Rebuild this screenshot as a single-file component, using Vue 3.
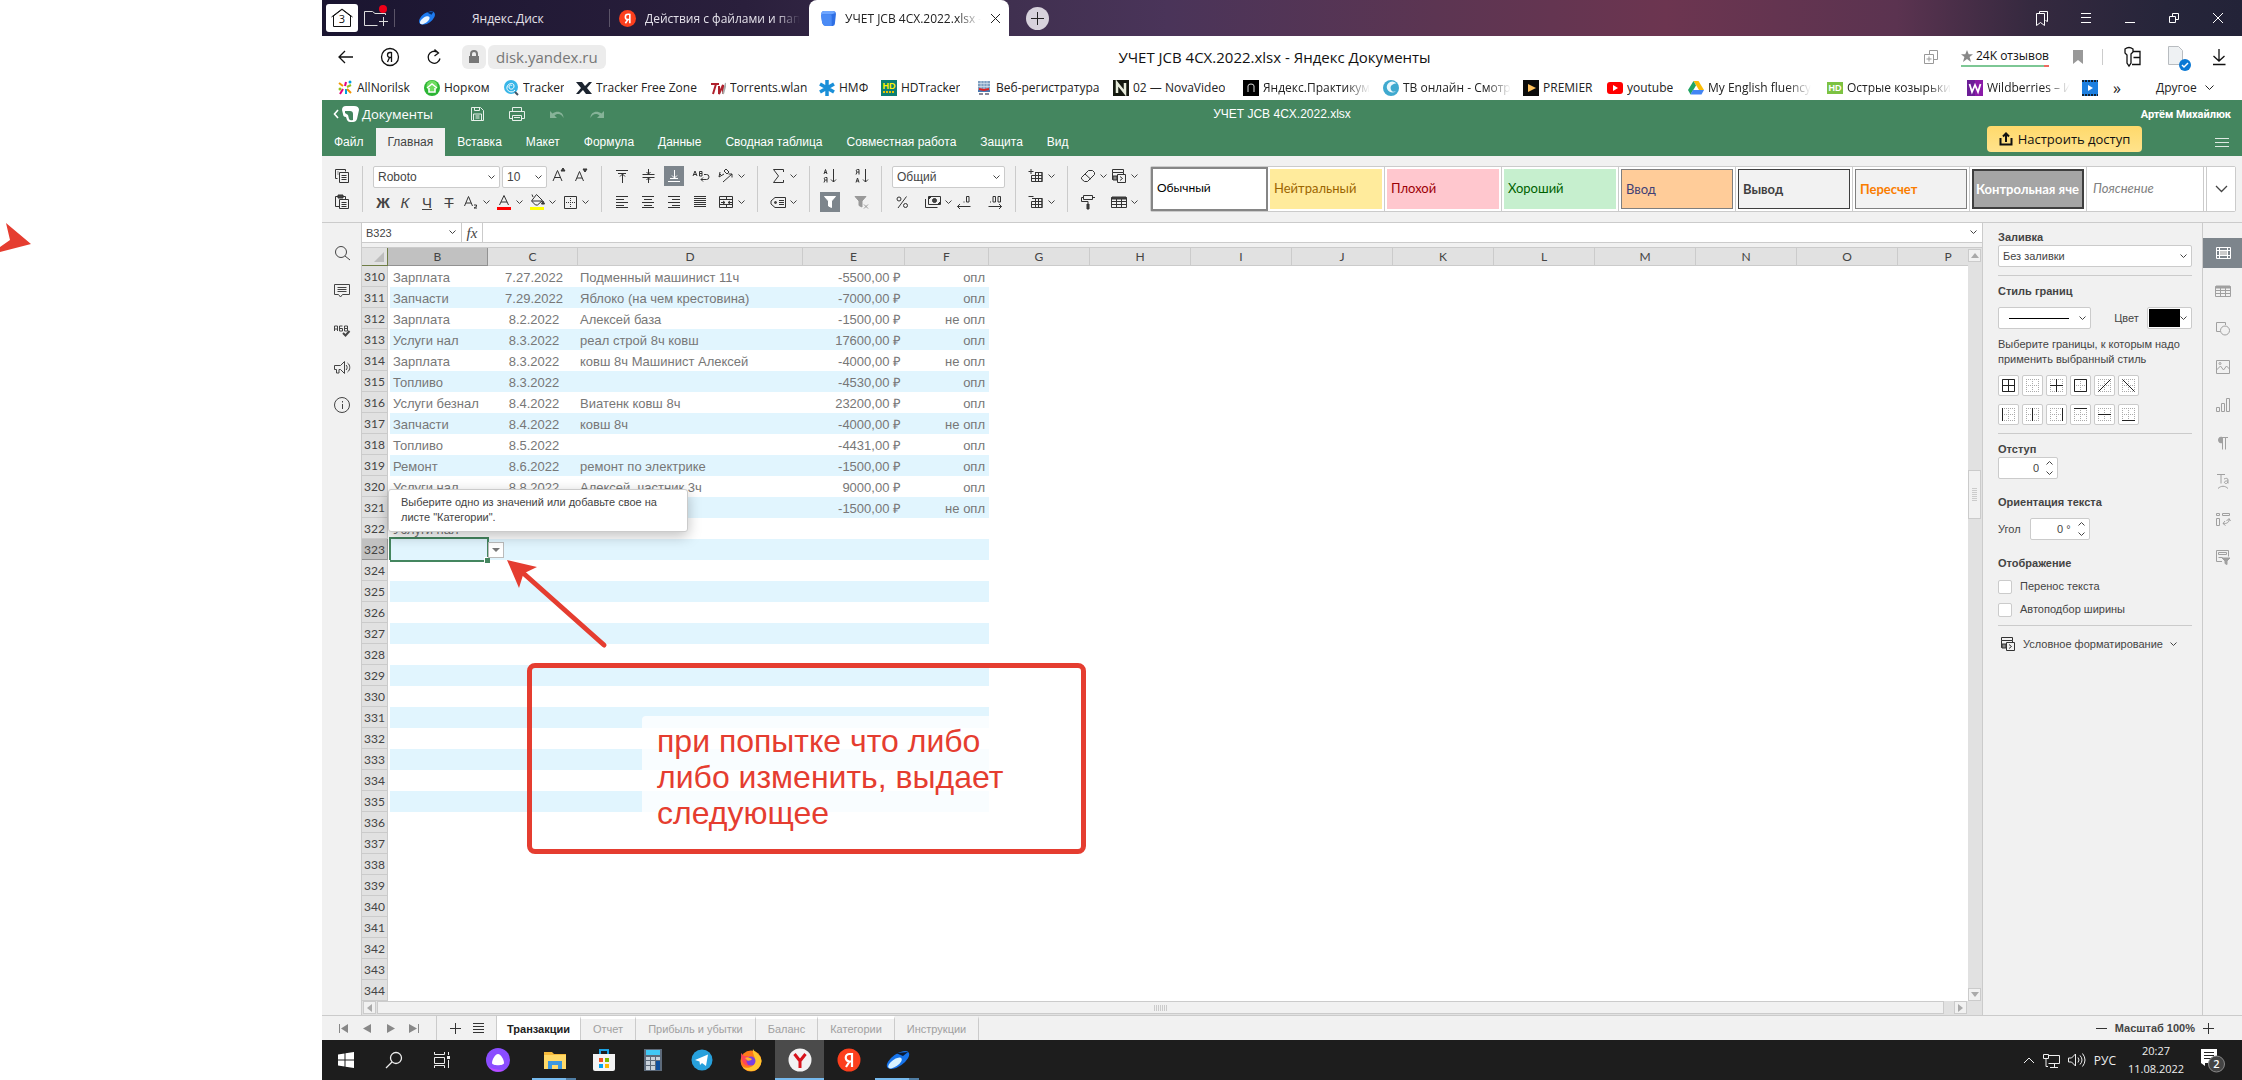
<script setup>
const icons = {
  copy: '<path d="M3.500 12.500v-9h10v2M3.500 12.500h2M5.500 6h1M5.500 8h1M7.500 6.500h9v10h-9zM9.500 9.500h5M9.500 11.500h5M9.500 13.500h5"/>',
  paste: '<path d="M7 14.500H3.500v-10h10v2.500M7.500 7.500h9v9h-9zM9.500 10.500h5M9.500 12.500h5M9.500 14.500h5"/><path d="M6 3h5v3H6z" class="f"/>',
  bigA: '<path d="M4 15L8.500 4.500 13 15M5.500 11.500h6"/><path d="M12 5l2-3 2 3z" class="f"/>',
  smallA: '<path d="M4.500 15L8.500 5.500 12.500 15M6 12h5"/><path d="M12 3h4l-2 3z" class="f"/>',
  alignTop: '<path d="M4 4.500h12M6 7.500h8M10.500 8v9M8 10.500l2.500-2.500 2.500 2.500"/>',
  alignMid: '<path d="M4.500 8.500h12M4.500 11.500h12M10.500 3v5M10.500 12v5M8.500 6l2 2 2-2M8.500 14l2-2 2 2"/>',
  alignBot: '<path d="M4 15.500h12M6 12.500h8M10.500 4v8M8 9.500l2.500 2.500 2.500-2.500"/>',
  wrap: '<path d="M3 10l2-5 2 5M3.500 8.500h3M9.500 5.500v4.500h2.500v-4.500zM9.500 7.500h2.500M14 8.500h2.500a2.500 2.500 0 0 1 0 5H11M13 11.500l-2 2 2 2"/>',
  rotate: '<path d="M3 11l5-3M3 11l1-5M4 8l2 2M8 5l3 3 2-2-3-3zM7 16L16 8M12.500 8H16v3.500"/>',
  left: '<path d="M4 4.500h12M4 7.500h8M4 10.500h12M4 13.500h8M4 15.500h12"/>',
  center: '<path d="M4 4.500h12M6 7.500h8M4 10.500h12M6 13.500h8M4 15.500h12"/>',
  right: '<path d="M4 4.500h12M8 7.500h8M4 10.500h12M8 13.500h8M4 15.500h12"/>',
  justify: '<path d="M4 4.500h12M4 6.500h12M4 8.500h12M4 10.500h12M4 12.500h12M4 14.500h12"/>',
  merge: '<path d="M3.500 4.500h13v11h-13zM3.500 7.500h13M3.500 12.500h13M10.500 4v3M10.500 13v3M5 10.500h4M12 10.500h4M7 9l2 1.500-2 1.500M14 9l-2 1.500 2 1.500"/>',
  sub: '<path d="M3.500 14L7.500 4.500 11.500 14M5 11h5"/><path d="M13 13h2.500v1.500L13 16h3"/>',
  colorA: '<path d="M5.500 13L10 3.500 14.500 13M7 10h6"/><path d="M3 15h14v3H3z" style="fill:#f00;stroke:none"/>',
  fill: '<path d="M9.500 2.500l6 6-5 4.500h-2L4.500 9zM6 5l-1-2.500M5 9h10"/><path d="M16 9l1.500 3h-3z" class="f"/><path d="M3 15h14v3H3z" style="fill:#ff0;stroke:none"/>',
  border: '<path d="M4.500 4.500h12v12h-12z"/><path d="M10.500 6v10M6 10.500h10" stroke-dasharray="1 1"/>',
  sigma: '<path d="M15.500 6V3.500H5.500l5 6.500-5 6.500h10V14"/>',
  tag: '<path d="M7 5.500h10.500v10H7L3 12V9zM11 8.500h5M11 10.500h5M11 12.500h5"/><circle cx="7.500" cy="10.500" r="1" class="f"/>',
  sortAZ: '<path d="M4 8l1.500-4.500L7 8M4.500 6.500h2M4 16.500l1-2.500M7 16.500v-5H5.500a1 1 0 0 0 0 2.500H7M13.500 3v13M11 13.500l2.500 2.500 2.500-2.500"/>',
  sortZA: '<path d="M4 8.500l1-2.500M7 8.500v-5H5.500a1 1 0 0 0 0 2.500H7M4 16.500L5.500 12 7 16.500M4.500 15h2M13.500 3v13M11 13.500l2.500 2.500 2.500-2.500"/>',
  filter: '<path d="M4.500 4.500h11L11.500 9v6.500l-3-1.500V9z" class="f"/>',
  noFilter: '<path d="M3 4.500h11L10 9v6l-3-1.500V9z" style="fill:#999;stroke:#999"/><path d="M12 12.500l4 4M16 12.500l-4 4" style="stroke:#999"/>',
  percent: '<circle cx="7" cy="7" r="2"/><circle cx="13.500" cy="13.500" r="2"/><path d="M14.500 4.500L6 16"/>',
  money: '<path d="M5.500 4.500h12v8h-12zM2.500 7v8.500h12"/><circle cx="11.500" cy="8.500" r="2" class="f"/><path d="M6 5l2 0-2 2zM17 12h-2l2-2z" class="f"/>',
  dec: '<path d="M12.500 4.500h2.500v5.500h-2.500zM10 9.500v1M3.500 14.500h13M6 12l-2.500 2.500L6 17"/>',
  inc: '<path d="M8 4.500h2.500v5.500H8zM13 4.500h2.500v5.500H13zM5.500 9.500v1M3.500 14.500h13M14 12l2.500 2.500-2.500 2.500"/>',
  insCell: '<path d="M2.500 5.500h5M5 3v5M5.500 15.500h10.500v-9H9M9.500 6v9.500M12.500 6v9.500M5.500 9.500h10.500M5.500 12.500h10.500M5.500 9.500v6M16 6v10"/>',
  delCell: '<path d="M2.500 4.500h5M5.500 15.500h10.500v-9H6M9.500 6v9.500M12.500 6v9.500M5.500 9.500h10.500M5.500 12.500h10.500M5.500 9.500v6M16 6v10"/>',
  eraser: '<path d="M3.500 11.500L10.500 4.500h4l2 2v2l-7 7h-3l-3-2.500zM7 8l5.500 5"/>',
  cond: '<path d="M3.500 3.500h11v3h-11zM3.500 6.500v7h4M14.500 6.500v1.500"/><path d="M4 10h4v4H4z" style="fill:#888"/><path d="M8.500 8.500h8v8h-8zM11 10.500l2.500 2-2.500 2"/>',
  painter: '<path d="M5.500 3.500h9v4h-9zM5.500 5.500h-2v4h6.500v2M14.500 5.500H17"/><path d="M9 12h2v5H9z" class="f"/>',
  table: '<path d="M2.500 5.500h15v10h-15zM2.500 9.500h15M2.500 12.500h15M7.500 6v9.500M12.500 6v9.500"/><path d="M3 5h14v2H3z" class="f"/>',
  search: '<circle cx="9" cy="9" r="5.500"/><path d="M13 13l5 4"/>',
  comment: '<path d="M2.500 3.500h15v10h-7l-2 2.500-2-2.500h-4zM5.500 6.500h9M5.500 8.500h9M5.500 10.500h9"/>',
  spell: '<path d="M2.500 12V7h3v5M2.500 10h3M7.500 7v5h3V9.500h-3M10.500 7h-3M12.500 7v5h3V7zM12.500 9.500h3"/><path d="M11 14l2.500 2.500L17.500 12" stroke-width="2"/>',
  horn: '<path d="M2.500 8.500h6l4-4v12l-4-4H7v3.500H4.500v-3.500h-2zM14 8c1.500 1 1.500 4 0 5M15.500 6c3 2 3 7 0 9"/>',
  info: '<circle cx="10" cy="10" r="7.500"/><path d="M10.500 9v5M10.500 6v1.500"/>',
  pCell: '<path d="M3.500 4.500h14v11h-14zM3.500 7.500h14M3.500 12.500h14M6.500 5v10M14.500 5v10"/><path d="M7 8h7v4H7z" style="fill:#ccc;stroke:none"/>',
  pTable: '<path d="M2.500 5.500h15v10h-15zM2.500 9.500h15M2.500 12.500h15M7.500 6v9.500M12.500 6v9.500"/><path d="M3 5h14v2H3z" class="f"/>',
  pShape: '<path d="M7 12.500H3.500v-9h9V6"/><circle cx="12" cy="11.500" r="4.500"/>',
  pImage: '<path d="M3.500 3.500h13v13h-13zM3.500 13l4-4 3 4 3-4 3 3"/><circle cx="7" cy="6.500" r="1"/>',
  pChart: '<path d="M3.500 12.500h3v4h-3zM8.500 8.500h3v8h-3zM13.500 3.500h3v13h-3z"/>',
  pPara: '<path d="M8.500 10a3 3 0 0 1 0-6z" class="f"/><path d="M8 4.500h7M9.500 4v12.500M12.500 4v12.500"/>',
  pText: '<path d="M4 3.500h8M8 3.500v9M11 8c2-1 4-1 4 1v3.500M15 10c-5-.5-4 3-1.500 2.500L15 11M5 17.500c3-3 7-3 10 0"/>',
  pPivot: '<path d="M3.500 4.500h3v2h-3zM9.500 4.500h7v2h-7zM3.500 9.500h3v7h-3zM16 10c.5 3-2 5-6 4.500M12 12l-2 2.500 2.500 2M13.500 12l2.500-2.500 1.500 2.500"/>',
  pSlicer: '<path d="M9 14.500H3.500v-11h12v6M5.500 5.500h8v2h-8zM5.500 10.500h4"/><path d="M9 11h8l-3 3v3.500l-2-1V14z" class="f"/>',
}
const favicons = {
  disk: '<ellipse cx="8" cy="8" rx="8" ry="4.500" transform="rotate(-35 8 8)" fill="#1e7bf0"/><ellipse cx="6" cy="10" rx="5" ry="2.500" transform="rotate(-35 6 10)" fill="#e8f5ff"/><path d="M8 3l6-1-2 3z" fill="#052a66"/>',
  ya: '<circle cx="8" cy="8" r="8" fill="#fc3f1d"/><path d="M10.200 3.500v9M10 4H8.500a2.400 2.400 0 0 0 0 5H10M8.300 9L6 12.500" fill="none" stroke="#fff" stroke-width="1.500"/>',
  docs: '<path d="M4 1h8q3 0 3 3l-1 9q0 2-2 2H5q-2 0-3-3L1 5q0-4 3-4z" fill="#2f6fe4"/><path d="M4 1h8q2 0 2 2l-3 1H4q-2 0-3 1 0-4 3-4z" fill="#6ea6ff"/><path d="M1 5q0-1 3-1h5q2 0 2 2v9H5q-2 0-3-3z" fill="#4b8bf5"/>',
  norilsk: '<g stroke-width="2" fill="none"><path d="M2 3l4 3" stroke="#f29400"/><path d="M9 2l-1 4" stroke="#e5007e"/><path d="M14 5l-4 2" stroke="#93c01f"/><path d="M3 14l3-5" stroke="#e5007e"/><path d="M9 14V9" stroke="#009fe3"/><path d="M14 13l-4-4" stroke="#f29400"/></g><circle cx="3" cy="9" r="1.500" fill="#93c01f"/><circle cx="13" cy="2" r="1.500" fill="#009fe3"/>',
  norkom: '<circle cx="8" cy="8" r="8" fill="#2bb534"/><circle cx="8" cy="6" r="5.500" fill="#6fdc60"/><path d="M3 8l5-4 5 4M5 8v4h6V8" fill="none" stroke="#fff" stroke-width="1.500"/>',
  tracker: '<circle cx="8" cy="7" r="7" fill="#38b6e8"/><path d="M12 10c-3 4-9 1-8-3s7-5 7-1-5 4-5 1 3-2 3-1" fill="none" stroke="#fff"/><path d="M12 12l3 3" stroke="#456" stroke-width="2"/>',
  x: '<path d="M0 2h6l3 4 4-4h3l-5 6 5 6h-6l-3-4-4 4H0l5-6z" fill="#1c2430"/>',
  tw: '<path d="M1 4h8M6 4L3 14M9 6v8l4-9v9" stroke="#b0202c" stroke-width="2" fill="none"/><path d="M13 14l3-11" stroke="#aaa" stroke-width="2"/>',
  star: '<path d="M8 0v16M1 4l14 8M1 12l14-8" stroke="#1a8fd8" stroke-width="3.500"/>',
  hdt: '<path d="M0 0h16v16H0z" fill="#0c7f75"/><text x="8" y="9" text-anchor="middle" font-size="9" font-weight="700" font-family="Liberation Sans, sans-serif" fill="#fff200">HD</text><path d="M2 12h12" stroke="#e8c200" stroke-dasharray="2 1" stroke-width="2"/>',
  web: '<path d="M2 1h12v10H2z" fill="#7f9fc0"/><path d="M2 3.500h12M2 6.500h12M5 1v10M8 1v10M11 1v10" stroke="#d6e2ee" stroke-width=".7"/><path d="M2 10h12v2H2z" fill="#4a7bb5"/><path d="M3 9l5 1 5-1" stroke="#d22" stroke-width="2" fill="none"/><path d="M3 13h4v2H3zM9 13h4v2H9z" fill="#889"/>',
  nova: '<path d="M0 0h16v16H0z" fill="#14180f"/><path d="M4 13V3l8 10V3" stroke="#e8eddc" stroke-width="2.500" fill="none"/>',
  prac: '<path d="M0 0h16v16H0z" fill="#000"/><path d="M5 12V6q0-2 3-2t3 2v6" stroke="#ddd" stroke-width="1" fill="none"/>',
  tv: '<circle cx="8" cy="8" r="8" fill="#3fa9cf"/><path d="M13 3a5.500 5.500 0 1 0 0 8c-5 3-7-4-4-6s5-1 4-2z" fill="#e9f7fc"/>',
  premier: '<path d="M0 0h16v16H0z" fill="#0b0b0b"/><path d="M5 4l8 4-8 4z" fill="#fdc05c"/>',
  yt: '<rect y="2" width="16" height="12" rx="3" fill="#f00"/><path d="M6 5l5 3-5 3z" fill="#fff"/>',
  drive: '<path d="M5.500 1h5l5.500 9h-5z" fill="#fbbc05"/><path d="M5.500 1L0 10l2.500 4.500L8 5.500z" fill="#1fa463"/><path d="M5 10h11l-2.500 4.500h-11z" fill="#4285f4"/>',
  hdg: '<path d="M0 2h16v12H0z" fill="#7cc242"/><text x="8" y="11" text-anchor="middle" font-size="9" font-weight="700" font-family="Liberation Sans, sans-serif" fill="#fff">HD</text>',
  wb: '<path d="M0 0h16v16H0z" fill="#8a1aa8"/><path d="M0 0h8v16H0z" fill="#6b1d96"/><path d="M2.500 4l2.500 8 3-7 3 7 2.500-8" stroke="#fff" stroke-width="1.800" fill="none"/>',
  film: '<path d="M0 0h16v16H0z" fill="#1d7fe0"/><path d="M0 1h16M0 15h16" stroke="#123" stroke-width="2" stroke-dasharray="2 1"/><path d="M6 5l5 3-5 3z" fill="#fff"/>',
}
const bookmarks = [
  ['norilsk', 'AllNorilsk'], ['norkom', 'Норком'], ['tracker', 'Tracker'], ['x', 'Tracker Free Zone'],
  ['tw', 'Torrents.wlan'], ['star', 'НМФ'], ['hdt', 'HDTracker'], ['web', 'Веб-регистратура'],
  ['nova', '02 — NovaVideo'], ['prac', 'Яндекс.Практикум', 1], ['tv', 'ТВ онлайн - Смотр', 1], ['premier', 'PREMIER'],
  ['yt', 'youtube'], ['drive', 'My English fluency', 1], ['hdg', 'Острые козырьки', 1], ['wb', 'Wildberries – И', 1], ['film', ''],
]
const menu = ['Файл', 'Главная', 'Вставка', 'Макет', 'Формула', 'Данные', 'Сводная таблица', 'Совместная работа', 'Защита', 'Вид']
const styles = [
  ['Обычный', 'normal'], ['Нейтральный', 'neutral'], ['Плохой', 'bad'], ['Хороший', 'good'], ['Ввод', 'entry'],
  ['Вывод', 'output'], ['Пересчет', 'calc'], ['Контрольная яче', 'control'], ['Пояснение', 'remark'],
]
const columns = ['B', 'C', 'D', 'E', 'F', 'G', 'H', 'I', 'J', 'K', 'L', 'M', 'N', 'O', 'P']
const data = {
  310: ['Зарплата', '7.27.2022', 'Подменный машинист 11ч', '-5500,00 ₽', 'опл'],
  311: ['Запчасти', '7.29.2022', 'Яблоко (на чем крестовина)', '-7000,00 ₽', 'опл'],
  312: ['Зарплата', '8.2.2022', 'Алексей база', '-1500,00 ₽', 'не опл'],
  313: ['Услуги нал', '8.3.2022', 'реал строй 8ч ковш', '17600,00 ₽', 'опл'],
  314: ['Зарплата', '8.3.2022', 'ковш 8ч Машинист Алексей', '-4000,00 ₽', 'не опл'],
  315: ['Топливо', '8.3.2022', '', '-4530,00 ₽', 'опл'],
  316: ['Услуги безнал', '8.4.2022', 'Виатенк ковш 8ч', '23200,00 ₽', 'опл'],
  317: ['Запчасти', '8.4.2022', 'ковш 8ч', '-4000,00 ₽', 'не опл'],
  318: ['Топливо', '8.5.2022', '', '-4431,00 ₽', 'опл'],
  319: ['Ремонт', '8.6.2022', 'ремонт по электрике', '-1500,00 ₽', 'опл'],
  320: ['Услуги нал', '8.8.2022', 'Алексей, частник 3ч', '9000,00 ₽', 'опл'],
  321: ['', '', '', '-1500,00 ₽', 'не опл'],
  322: ['Услуги нал', '', '', '', ''],
}
const rows = Array.from({ length: 35 }, (_, i) => {
  const n = 310 + i
  return { n, cells: data[n] || ['', '', '', '', ''], band: n % 2 === 1 && n <= 335 }
})
const dots = '<path d="M4.500 4v13M10.500 4v13M16.500 4v13M4 4.500h13M4 10.500h13M4 16.500h13" stroke="#aaa" stroke-dasharray="1 1"/>'
const borderButtons = [
  ['Все границы', '<path d="M4.500 4.500h12v12h-12zM10.500 4v13M4 10.500h13"/>'],
  ['Без границ', ''],
  ['Внутренние', '<path d="M10.500 4v13M4 10.500h13"/>'],
  ['Внешние', '<path d="M4.500 4.500h12v12h-12z"/>'],
  ['Диагональ вверх', '<path d="M4.500 16.500l12-12"/>'],
  ['Диагональ вниз', '<path d="M4.500 4.500l12 12"/>'],
  ['Левая', '<path d="M4.500 4v13"/>'],
  ['Внутренние вертикальные', '<path d="M10.500 4v13"/>'],
  ['Правая', '<path d="M16.500 4v13"/>'],
  ['Верхняя', '<path d="M4 4.500h13"/>'],
  ['Внутренние горизонтальные', '<path d="M4 10.500h13"/>'],
  ['Нижняя', '<path d="M4 16.500h13"/>'],
]
const leftTools = ['search', 'comment', 'spell', 'horn', 'info']
const rightTools = ['pCell', 'pTable', 'pShape', 'pImage', 'pChart', 'pPara', 'pText', 'pPivot', 'pSlicer']
const sheets = ['Транзакции', 'Отчет', 'Прибыль и убытки', 'Баланс', 'Категории', 'Инструкции']
const apps = [
  ['Проводник', 'open', '<path d="M1 4h8l2 2h12v15H1z" fill="#f5b93b"/><path d="M1 7h22v14H1z" fill="#ffd968"/><path d="M5 21v-8h14v8h-4v-4H9v4z" fill="#3b97e0"/>'],
  ['Магазин', '', '<path d="M1 6h22v15a2 2 0 0 1-2 2H3a2 2 0 0 1-2-2z" fill="#f3f3f3"/><path d="M8 6V2h8v4" fill="none" stroke="#1ba1e2" stroke-width="2"/><path d="M7 10h4v4H7z" fill="#f25022"/><path d="M13 10h4v4h-4z" fill="#7fba00"/><path d="M7 16h4v4H7z" fill="#00a4ef"/><path d="M13 16h4v4h-4z" fill="#ffb900"/>'],
  ['Калькулятор', '', '<path d="M3 1h18v22H3z" fill="#5d6a7a"/><path d="M5 2h14v5H5z" fill="#41c8f5"/><path d="M5 9h4v3H5zM10 9h4v3h-4zM5 13h4v4H5zM10 13h4v4h-4zM5 18h4v4H5zM10 18h4v4h-4zM15 9h4v3h-4z" fill="#c9d2db"/><path d="M15 13h4v9h-4z" fill="#0d4f9e"/>'],
  ['Telegram', '', '<circle cx="12" cy="12" r="10.500" fill="#27a0dc"/><path d="M5 12l13-5.500-2 11.500-4-3-2 2-.5-3.500z" fill="#fff"/>'],
  ['Firefox', '', '<circle cx="12" cy="13" r="10.500" fill="#ff7a1a"/><path d="M14 1c1 3 8 5 8.500 12A10.500 10.500 0 0 1 3 18c5 4 13 1 13-5S13 6 14 1z" fill="#ffc62e"/><path d="M2 5l3 3h4l4 4-3 6c-5 0-8-4-8-13z" fill="#ff4658"/><circle cx="12" cy="13" r="4.500" fill="#7a3fe0"/><path d="M6 10c3-2 5 0 7 1-1 2-3 1-4 2z" fill="#ffb02e"/>'],
  ['Яндекс Браузер', 'active', '<circle cx="12" cy="12" r="11.500" fill="#f2f2f2"/><path d="M6.500 6l5.500 7 5.500-7M12 12v8" fill="none" stroke="#d8131b" stroke-width="3"/>'],
  ['Яндекс', '', '<circle cx="12" cy="12" r="11.500" fill="#fc3f1d"/><path d="M15 5v14M15 6h-2.500a3.500 3.500 0 0 0 0 7.500H15M12.500 13.500L9 19" fill="none" stroke="#fff" stroke-width="2.200"/>'],
  ['Диск', 'open', '<ellipse cx="12" cy="12" rx="13" ry="6" transform="rotate(-35 12 12)" fill="#1673ea"/><ellipse cx="9" cy="15" rx="8" ry="3.500" transform="rotate(-35 9 15)" fill="#d8f2ff"/><path d="M10 5l12-1-5 4z" fill="#0a1a33"/>'],
]
</script>

<template>
  <div class="page">
    <div class="screen">
      <header class="tabstrip">
        <button class="home" aria-label="Табло"><svg width="24" height="20" viewBox="0 0 24 20"><path d="M3.500 18.500V8L12 1.500 20.500 8v10.500zM1.500 9L12 1l10.500 8" fill="none" stroke="#111" /><text x="12" y="15" text-anchor="middle" font-size="11" font-family="Open Sans, sans-serif" fill="#111">3</text></svg></button>
        <button class="bare folder" aria-label="Новая группа"><svg width="26" height="26" viewBox="0 0 26 26"><path d="M22.500 10V8.500H12L9.500 6.500H1.500v14h13M20.500 12v9M16 16.500h9" fill="none" stroke="#ddd" /><circle cx="20" cy="4" r="4" fill="#f00018" /></svg></button>
        <div class="tab idle"><svg width="18" height="18" viewBox="0 0 16 16" v-html="favicons.disk" /><span class="wide">Яндекс.Диск</span></div>
        <div class="tab idle second"><svg width="17" height="17" viewBox="0 0 16 16" v-html="favicons.ya" /><span class="fade">Действия с файлами и пап</span></div>
        <div class="tab current"><svg width="17" height="17" viewBox="0 0 16 16" v-html="favicons.docs" /><span class="fade">УЧЕТ JCB 4CX.2022.xlsx -</span><button class="bare" aria-label="Закрыть вкладку"><svg width="11" height="11" viewBox="0 0 11 11"><path d="M1 1l9 9M10 1l-9 9" stroke="#222" /></svg></button></div>
        <button class="plus" aria-label="Новая вкладка"><svg width="13" height="13" viewBox="0 0 13 13"><path d="M6.500 0v13M0 6.500h13" stroke="#222" /></svg></button>
        <div class="winbtns">
          <button class="bare" aria-label="Закладки"><svg width="20" height="20" viewBox="0 0 20 20"><path d="M4.500 5.500h8v12l-4-3-4 3zM7.500 5V3.500h8v10l-2-1" /></svg></button>
          <button class="bare" aria-label="Меню"><svg width="20" height="20" viewBox="0 0 20 20"><path d="M5 5.500h10M5 9.500h10M5 14.500h10" /></svg></button>
          <button class="bare" aria-label="Свернуть"><svg width="20" height="20" viewBox="0 0 20 20"><path d="M5 14.500h10" /></svg></button>
          <button class="bare" aria-label="Восстановить"><svg width="20" height="20" viewBox="0 0 20 20"><path d="M5.500 8.500h6v6h-6zM8.500 8V5.500h6v6h-3" /></svg></button>
          <button class="bare" aria-label="Закрыть"><svg width="20" height="20" viewBox="0 0 20 20"><path d="M5 5l10 10M15 5L5 15" /></svg></button>
        </div>
      </header>

      <div class="address">
        <div class="addr-left">
          <button class="bare" aria-label="Назад"><svg width="20" height="20" viewBox="0 0 20 20"><path d="M17 10H3.500M9 4l-6 6 6 6" /></svg></button>
          <button class="bare" aria-label="Яндекс"><svg width="20" height="20" viewBox="0 0 20 20"><circle cx="10" cy="10" r="8.500" /><path d="M11.500 5v10M11.500 5.500H10a2.300 2.300 0 0 0 0 5h1.500M9.500 10.500L7.500 15" /></svg></button>
          <button class="bare" aria-label="Обновить"><svg width="20" height="20" viewBox="0 0 20 20"><path d="M16 11.500a6 6 0 1 1-3-6.500l1.500 1M10.500 2.500l4 3.500-4 3" /></svg></button>
          <span class="lock"><svg width="12" height="14" viewBox="0 0 12 14"><path d="M1 6h10v7H1z" fill="#777" /><path d="M3 6V4a3 3 0 0 1 6 0v2" fill="none" stroke="#777" stroke-width="2" /></svg></span>
          <a class="url" href="#">disk.yandex.ru</a>
        </div>
        <div class="doc-title">УЧЕТ JCB 4CX.2022.xlsx - Яндекс Документы</div>
        <div class="addr-right">
          <svg class="gray" width="20" height="20" viewBox="0 0 20 20"><path d="M3.500 7.500h9v9h-9zM8 9.500v5M5.500 12h5M8.500 7V3.500h8v9H13" /></svg>
          <a class="reviews" href="#"><svg width="12" height="12" viewBox="0 0 12 12"><path d="M6 0l1.700 4.200H12L8.600 7 10 12 6 9l-4 3 1.400-5L0 4.200h4.300z" fill="#888" /></svg>24K отзывов</a>
          <svg width="12" height="16" viewBox="0 0 12 16"><path d="M1 1h10v14l-5-4-5 4z" fill="#999" /></svg>
          <i></i>
          <svg width="20" height="22" viewBox="0 0 20 22"><path d="M2 3q4-3 8 0v3l-2 2v9l-2 3-2-3V9L2 7zM10 5.500h7v13H9M10.500 11.500H17" fill="none" stroke="#111" stroke-width="1.300" /></svg>
          <svg width="26" height="28" viewBox="0 0 26 28"><path d="M1.500 3.500h10l4 4v14h-14z" fill="#eef1f3" stroke="#b8bcc0" /><circle cx="18" cy="22" r="6" fill="#0a78d4" /><path d="M15 22l2 2 4-4" fill="none" stroke="#fff" stroke-width="1.500" /></svg>
          <svg width="16" height="20" viewBox="0 0 16 20"><path d="M8 2v12M2.500 9L8 14l5.500-5M2 17.500h12.500" fill="none" stroke="#111" stroke-width="1.300" /></svg>
        </div>
      </div>

      <nav class="bookmarks">
        <a v-for="b in bookmarks" :key="b[0]" href="#"><svg width="16" height="16" viewBox="0 0 16 16" v-html="favicons[b[0]]" /><span :class="{ fade: b[2] }">{{ b[1] }}</span></a>
        <button class="bare more" aria-label="Ещё закладки">»</button>
        <button class="bare other">Другое <svg width="9" height="6" viewBox="0 0 9 6"><path d="M.5.500l4 4 4-4" fill="none" stroke="#222" /></svg></button>
      </nav>

      <div class="appbar">
        <div class="brandrow">
          <a class="brand" href="#"><svg width="6" height="10" viewBox="0 0 6 10"><path d="M5 1L1.500 5 5 9" fill="none" stroke="#fff" stroke-width="1.600" /></svg><svg width="17" height="18" viewBox="0 0 17 18"><path d="M4 1h8q5 0 5 4l-2 9q-1 3-4 3H8q-2 0-3-2l-1-3q-3 0-3-3L0 5q0-4 4-4z" fill="#fff" /><path d="M3 6h5q3 0 3 3v6q-3 1-4-1L6 10 3 8z" fill="#44865f" /></svg>Документы</a>
          <div class="quick">
            <button class="bare" aria-label="Сохранить"><svg width="20" height="20" viewBox="0 0 20 20"><path d="M4.500 3.500h9l3 3v10h-12zM7.500 3.500v3h5v-3M6.500 16v-6h8v6M8.500 12h4M8.500 14h4" /></svg></button>
            <button class="bare" aria-label="Печать"><svg width="20" height="20" viewBox="0 0 20 20"><path d="M5.500 7V3.500h9V7M5 14.500H2.500v-7h15v7H15M5.500 11.500h9v5h-9zM7 13.500h6" /></svg></button>
            <button class="bare dim" aria-label="Отменить"><svg width="20" height="20" viewBox="0 0 20 20"><path d="M3 7v7h7L7.500 11.500c4-3 7-1 9 2.500 0-6-6-8-11-4.500z" /></svg></button>
            <button class="bare dim" aria-label="Повторить"><svg width="20" height="20" viewBox="0 0 20 20"><path d="M17 7v7h-7l2.500-2.500c-4-3-7-1-9 2.500 0-6 6-8 11-4.500z" /></svg></button>
          </div>
          <div class="fname">УЧЕТ JCB 4CX.2022.xlsx</div>
          <div class="user">Артём Михайлюк</div>
        </div>
        <div class="menurow">
          <button v-for="(m, i) in menu" :key="m" :class="['mtab', { on: i === 1 }]">{{ m }}</button>
          <span class="grow"></span>
          <button class="share"><svg width="14" height="14" viewBox="0 0 14 14"><path d="M1.500 6v6.500h11V6M7 10V2M4 4.500l3-3 3 3" fill="none" stroke="#111" stroke-width="2" /></svg>Настроить доступ</button>
          <button class="bare burger" aria-label="Параметры вида"><svg width="14" height="11" viewBox="0 0 14 11"><path d="M0 1.500h14M0 5.500h14M0 9.500h14" stroke="#dfeae3" /></svg></button>
        </div>
      </div>

      <div class="toolbar">
        <div class="group g1">
          <div class="trow"><button class="ib" aria-label="Копировать"><svg v-html="icons.copy" viewBox="0 0 20 20" /></button></div>
          <div class="trow"><button class="ib" aria-label="Вставить"><svg v-html="icons.paste" viewBox="0 0 20 20" /></button></div>
        </div>
        <div class="group g2">
          <div class="trow tight">
            <span class="combo font"><select aria-label="Шрифт"><option>Roboto</option></select><svg class="chev" viewBox="0 0 7 5"><path d="M.5.500l3 3 3-3" /></svg></span>
            <span class="combo size"><select aria-label="Размер"><option>10</option></select><svg class="chev" viewBox="0 0 7 5"><path d="M.5.500l3 3 3-3" /></svg></span>
            <button class="ib" aria-label="Крупнее"><svg v-html="icons.bigA" viewBox="0 0 20 20" /></button>
            <button class="ib" aria-label="Мельче"><svg v-html="icons.smallA" viewBox="0 0 20 20" /></button>
          </div>
          <div class="trow tight">
            <button class="ib glyph"><b>Ж</b></button><button class="ib glyph"><i>К</i></button><button class="ib glyph"><u>Ч</u></button><button class="ib glyph"><s>Т</s></button>
            <button v-for="n in ['sub', 'colorA', 'fill', 'border']" :key="n" class="ib dd" :aria-label="n"><svg v-html="icons[n]" viewBox="0 0 20 20" /><svg class="chev" viewBox="0 0 7 5"><path d="M.5.500l3 3 3-3" /></svg></button>
          </div>
        </div>
        <div class="group g3">
          <div class="trow">
            <button v-for="n in ['alignTop', 'alignMid', 'alignBot', 'wrap']" :key="n" :class="['ib', { on: n === 'alignBot' }]" :aria-label="n"><svg v-html="icons[n]" viewBox="0 0 20 20" /></button>
            <button class="ib dd" aria-label="Ориентация"><svg v-html="icons.rotate" viewBox="0 0 20 20" /><svg class="chev" viewBox="0 0 7 5"><path d="M.5.500l3 3 3-3" /></svg></button>
          </div>
          <div class="trow">
            <button v-for="n in ['left', 'center', 'right', 'justify']" :key="n" class="ib" :aria-label="n"><svg v-html="icons[n]" viewBox="0 0 20 20" /></button>
            <button class="ib dd" aria-label="Объединить"><svg v-html="icons.merge" viewBox="0 0 20 20" /><svg class="chev" viewBox="0 0 7 5"><path d="M.5.500l3 3 3-3" /></svg></button>
          </div>
        </div>
        <div class="group g4">
          <div v-for="n in ['sigma', 'tag']" :key="n" class="trow"><button class="ib dd" :aria-label="n"><svg v-html="icons[n]" viewBox="0 0 20 20" /><svg class="chev" viewBox="0 0 7 5"><path d="M.5.500l3 3 3-3" /></svg></button></div>
        </div>
        <div class="group g5">
          <div class="trow"><button v-for="n in ['sortAZ', 'sortZA']" :key="n" class="ib" :aria-label="n"><svg v-html="icons[n]" viewBox="0 0 20 20" /></button></div>
          <div class="trow"><button v-for="n in ['filter', 'noFilter']" :key="n" :class="['ib', { on: n === 'filter' }]" :aria-label="n"><svg v-html="icons[n]" viewBox="0 0 20 20" /></button></div>
        </div>
        <div class="group g6">
          <div class="trow"><span class="combo fmt"><select aria-label="Формат"><option>Общий</option></select><svg class="chev" viewBox="0 0 7 5"><path d="M.5.500l3 3 3-3" /></svg></span></div>
          <div class="trow">
            <button class="ib" aria-label="Проценты"><svg v-html="icons.percent" viewBox="0 0 20 20" /></button>
            <button class="ib dd" aria-label="Финансовый"><svg v-html="icons.money" viewBox="0 0 20 20" /><svg class="chev" viewBox="0 0 7 5"><path d="M.5.500l3 3 3-3" /></svg></button>
            <button class="ib" aria-label="Меньше знаков"><svg v-html="icons.dec" viewBox="0 0 20 20" /></button>
            <button class="ib" aria-label="Больше знаков"><svg v-html="icons.inc" viewBox="0 0 20 20" /></button>
          </div>
        </div>
        <div class="group g7">
          <div v-for="n in ['insCell', 'delCell']" :key="n" class="trow"><button class="ib dd" :aria-label="n"><svg v-html="icons[n]" viewBox="0 0 20 20" /><svg class="chev" viewBox="0 0 7 5"><path d="M.5.500l3 3 3-3" /></svg></button></div>
        </div>
        <div class="group g8">
          <div class="trow"><button v-for="n in ['eraser', 'cond']" :key="n" class="ib dd" :aria-label="n"><svg v-html="icons[n]" viewBox="0 0 20 20" /><svg class="chev" viewBox="0 0 7 5"><path d="M.5.500l3 3 3-3" /></svg></button></div>
          <div class="trow"><button class="ib dd" aria-label="Формат по образцу"><svg v-html="icons.painter" viewBox="0 0 20 20" /></button><button class="ib dd" aria-label="Таблица"><svg v-html="icons.table" viewBox="0 0 20 20" /><svg class="chev" viewBox="0 0 7 5"><path d="M.5.500l3 3 3-3" /></svg></button></div>
        </div>
        <div class="gallery">
          <button v-for="s in styles" :key="s[1]" :class="['style', s[1]]"><span>{{ s[0] }}</span></button>
          <button class="expand" aria-label="Все стили"><svg width="13" height="8" viewBox="0 0 13 8"><path d="M1 1l5.500 5.500L12 1" fill="none" stroke="#444" stroke-width="1.300" /></svg></button>
        </div>
      </div>

      <main class="work">
        <aside class="leftbar">
          <button v-for="n in leftTools" :key="n" class="bare" :aria-label="n"><svg width="20" height="20" viewBox="0 0 20 20" v-html="icons[n]" /></button>
        </aside>

        <section class="sheet">
          <div class="formula">
            <span class="namebox"><input aria-label="Имя ячейки" value="B323" /><svg class="chev" viewBox="0 0 7 5"><path d="M.5.500l3 3 3-3" /></svg></span>
            <button class="fx"><i>fx</i></button>
            <input class="expr" aria-label="Формула" />
            <svg class="chev" viewBox="0 0 7 5"><path d="M.5.500l3 3 3-3" /></svg>
          </div>
          <div class="gridarea">
            <div class="gridcol">
              <table>
                <colgroup><col class="c0" /><col v-for="c in columns" :key="c" :class="'c' + c" /></colgroup>
                <thead><tr><th class="corner"><svg width="10" height="10" viewBox="0 0 10 10"><path d="M10 0v10H0z" fill="#bdbdbd" /></svg></th><th v-for="c in columns" :key="c" :class="{ sel: c === 'B' }">{{ c }}</th></tr></thead>
                <tbody>
                  <tr v-for="r in rows" :key="r.n" :class="{ band: r.band }">
                    <th :class="{ sel: r.n === 323 }">{{ r.n }}</th>
                    <td v-for="(v, i) in r.cells" :key="i" :class="'d' + i">{{ v }}<template v-if="r.n === 323 && i === 0"><span class="frame"></span><button class="pick" aria-label="Список значений"><svg width="8" height="4" viewBox="0 0 8 4"><path d="M0 0h8L4 4z" fill="#777" /></svg></button><span class="hint">Выберите одно из значений или добавьте свое на листе "Категории".</span></template></td>
                    <td colspan="10"></td>
                  </tr>
                </tbody>
              </table>
              <div class="hscroll"><span class="arr"><svg width="5" height="8" viewBox="0 0 5 8"><path d="M5 0v8L0 4z" fill="#aaa" /></svg></span><span class="thumb"></span><span class="arr"><svg width="5" height="8" viewBox="0 0 5 8"><path d="M0 0v8l5-4z" fill="#aaa" /></svg></span></div>
            </div>
            <div class="vscroll"><span class="arr"><svg width="8" height="5" viewBox="0 0 8 5"><path d="M0 5h8L4 0z" fill="#aaa" /></svg></span><i class="before"></i><span class="thumb"></span><i class="after"></i><span class="arr"><svg width="8" height="5" viewBox="0 0 8 5"><path d="M0 0h8L4 5z" fill="#aaa" /></svg></span></div>
          </div>
        </section>

        <aside class="panel">
          <label class="h" for="fillsel">Заливка</label>
          <span class="combo full"><select id="fillsel"><option>Без заливки</option></select><svg class="chev" viewBox="0 0 7 5"><path d="M.5.500l3 3 3-3" /></svg></span>
          <hr />
          <div class="h">Стиль границ</div>
          <div class="line-row">
            <button class="combo linesel" aria-label="Линия"><i></i><svg class="chev" viewBox="0 0 7 5"><path d="M.5.500l3 3 3-3" /></svg></button>
            <span>Цвет</span>
            <button class="combo color" aria-label="Цвет"><i></i><svg class="chev" viewBox="0 0 7 5"><path d="M.5.500l3 3 3-3" /></svg></button>
          </div>
          <p>Выберите границы, к которым надо применить выбранный стиль</p>
          <div class="borders"><button v-for="b in borderButtons" :key="b[0]" :aria-label="b[0]"><svg width="21" height="21" viewBox="0 0 21 21" v-html="dots + b[1]" /></button></div>
          <hr />
          <label class="h" for="indent">Отступ</label>
          <span class="spin"><input id="indent" value="0" /><svg width="7" height="16" viewBox="0 0 7 16"><path d="M.5 4.500l3-3 3 3M.5 11.500l3 3 3-3" /></svg></span>
          <div class="h orient">Ориентация текста</div>
          <div class="angle"><label for="angle">Угол</label><span class="spin"><input id="angle" value="0 °" /><svg width="7" height="16" viewBox="0 0 7 16"><path d="M.5 4.500l3-3 3 3M.5 11.500l3 3 3-3" /></svg></span></div>
          <div class="h view">Отображение</div>
          <label class="tick"><input type="checkbox" />Перенос текста</label>
          <label class="tick"><input type="checkbox" />Автоподбор ширины</label>
          <hr class="last" />
          <button class="bare condfmt"><svg width="20" height="20" viewBox="0 0 20 20" v-html="icons.cond" />Условное форматирование<svg class="chev" viewBox="0 0 7 5"><path d="M.5.500l3 3 3-3" /></svg></button>
        </aside>

        <aside class="rightbar">
          <button v-for="(n, i) in rightTools" :key="n" :class="['bare', { on: i === 0 }]" :aria-label="n"><svg width="20" height="20" viewBox="0 0 20 20" v-html="icons[n]" /></button>
        </aside>
      </main>

      <footer class="status">
        <div class="navs">
          <button class="bare" aria-label="Первый"><svg width="11" height="9" viewBox="0 0 11 9"><path d="M0 0h1v9H0zM9 0v9L2 4.500z" fill="#888" /></svg></button>
          <button class="bare" aria-label="Предыдущий"><svg width="11" height="9" viewBox="0 0 11 9"><path d="M9 0v9L1 4.500z" fill="#888" /></svg></button>
          <button class="bare" aria-label="Следующий"><svg width="11" height="9" viewBox="0 0 11 9"><path d="M2 0v9l8-4.500z" fill="#888" /></svg></button>
          <button class="bare" aria-label="Последний"><svg width="11" height="9" viewBox="0 0 11 9"><path d="M10 0h1v9h-1zM1 0v9l8-4.500z" fill="#888" /></svg></button>
        </div>
        <div class="adds">
          <button class="bare" aria-label="Добавить лист"><svg width="11" height="11" viewBox="0 0 11 11"><path d="M5.500 0v11M0 5.500h11" stroke="#333" /></svg></button>
          <button class="bare" aria-label="Список листов"><svg width="11" height="11" viewBox="0 0 11 11"><path d="M0 .500h11M0 3.500h11M0 6.500h11M0 9.500h11" stroke="#333" /></svg></button>
        </div>
        <button v-for="(s, i) in sheets" :key="s" :class="['stab', { on: i === 0 }]">{{ s }}</button>
        <span class="grow"></span>
        <div class="zoomer">
          <button class="bare" aria-label="Уменьшить"><svg width="11" height="11" viewBox="0 0 11 11"><path d="M0 5.500h11" stroke="#333" /></svg></button>
          <b>Масштаб 100%</b>
          <button class="bare" aria-label="Увеличить"><svg width="11" height="11" viewBox="0 0 11 11"><path d="M5.500 0v11M0 5.500h11" stroke="#333" /></svg></button>
        </div>
      </footer>

      <div class="taskbar">
        <button class="task" aria-label="Пуск"><svg width="16" height="16" viewBox="0 0 16 16"><path d="M0 2.500L6.500 1.500v6H0zM7.500 1.300L16 0v7.500H7.500zM0 8.500h6.500v6L0 13.500zM7.500 8.500H16V16l-8.500-1.300z" fill="#fff" /></svg></button>
        <button class="task" aria-label="Поиск"><svg width="18" height="18" viewBox="0 0 18 18"><circle cx="11" cy="7" r="5.500" fill="none" stroke="#eee" stroke-width="1.300" /><path d="M7 11l-6 6" stroke="#eee" stroke-width="1.300" /></svg></button>
        <button class="task" aria-label="Задачи"><svg width="18" height="16" viewBox="0 0 18 16"><path d="M1.500 0v2.500h10V0M1.500 5.500h10v6h-10zM1.500 16v-2.500h10V16M15.500 0v3M15.500 8v8" fill="none" stroke="#eee" /><path d="M14 4h3v3h-3z" fill="#eee" /></svg></button>
        <button class="task alice" aria-label="Алиса"><svg width="24" height="24" viewBox="0 0 24 24"><circle cx="12" cy="12" r="12" fill="#8a4dff" /><path d="M2 18A12 12 0 0 0 18 22q-12 0-16-4z" fill="#c04bff" /><path d="M12 6c3 0 6 6 6 9s-12 3-12 0 3-9 6-9z" fill="#fff" /></svg></button>
        <button v-for="a in apps" :key="a[0]" :class="['task', 'app', a[1]]" :aria-label="a[0]"><svg width="24" height="24" viewBox="0 0 24 24" v-html="a[2]" /></button>
        <span class="grow"></span>
        <div class="tray">
          <svg width="12" height="8" viewBox="0 0 12 8"><path d="M1 7l5-5 5 5" /></svg>
          <svg width="17" height="16" viewBox="0 0 17 16"><path d="M5.500 3.500h11v8h-11M11.500 12v3M7 15.500h8M.500 2.500h5v4h-5zM3 6.500v8h2" /></svg>
          <svg width="18" height="14" viewBox="0 0 18 14"><path d="M.500 5h3l4-4v12l-4-4h-3zM10 4.500q2 2.500 0 5M12 2.500q4 4.500 0 9M14.500.500q5 6.500 0 13" /></svg>
          <span>РУС</span>
          <time>20:27<br />11.08.2022</time>
          <svg class="note" width="26" height="26" viewBox="0 0 26 26"><path d="M1 2h16v14H5v3l-4-3z" style="fill:#fff;stroke:none" /><path d="M4 5.500h10M4 8.500h10M4 11.500h7" style="stroke:#222" /><circle cx="16.500" cy="17" r="8" style="fill:#444;stroke:#888" /><text x="16.500" y="21" text-anchor="middle" font-size="11" font-weight="600" font-family="Open Sans, sans-serif" style="fill:#fff;stroke:none">2</text></svg>
        </div>
      </div>
    </div>

    <svg class="marker" width="32" height="32" viewBox="0 0 32 32"><path d="M6 0l25 21-31 8v-5l10-7z" fill="#e53d30" /></svg>
    <svg class="arrow" width="104" height="92" viewBox="0 0 104 92"><path d="M3 3l30 7-13.500 6.500L15 31z" fill="#e53d30" /><path d="M18 15l82 73" stroke="#e53d30" stroke-width="5" stroke-linecap="round" /></svg>
    <div class="callout"><p>при попытке что либо<br />либо изменить, выдает<br />следующее</p></div>
  </div>
</template>

<style>
body { margin: 0; background: #fff; }
</style>

<style scoped>
* { box-sizing: border-box; }
.page { position: relative; display: flex; padding-left: 322px; font-family: "Liberation Sans", Arial, sans-serif; font-size: 11px; color: #444; overflow: hidden; }
.screen { flex: 1; min-width: 0; display: flex; flex-direction: column; }
button, input, select { font: inherit; color: inherit; margin: 0; border-radius: 0; }
.bare { border: 0; background: none; padding: 0; display: flex; align-items: center; justify-content: center; }
svg { display: block; flex: none; }
.grow { flex: 1; }
a { color: inherit; text-decoration: none; }
.fade { -webkit-mask-image: linear-gradient(90deg, #000 calc(100% - 24px), transparent); mask-image: linear-gradient(90deg, #000 calc(100% - 24px), transparent); }
.tabstrip, .address, .bookmarks, .brand, .share, .tray { font-family: "Open Sans", "Noto Sans", sans-serif; }

.tabstrip { height: 36px; display: flex; align-items: center; background: linear-gradient(90deg, #1a1530 0, #2a1f3c 22%, #403050 36%, #4a3459 44%, #5c3552 58%, #6c3550 70%, #5b3350 82%, #35293f 89%, #26253a 96%, #232338 100%); font-size: 12px; }
.home { width: 32px; height: 28px; margin-left: 4px; border: 0; border-radius: 3px; background: #fff; padding: 0; display: flex; align-items: center; justify-content: center; }
.folder { width: 36px; }
.tab { display: flex; align-items: center; height: 36px; white-space: nowrap; }
.tab span { overflow: hidden; }
.idle { width: 215px; color: #e4e1ea; position: relative; padding-left: 24px; }
.idle::before { content: ""; position: absolute; left: 0; top: 9px; height: 18px; width: 1px; background: #5b5468; }
.idle .wide { margin-left: 36px; }
.second { width: 200px; padding-left: 10px; }
.second span { width: 155px; margin-left: 9px; }
.current { width: 200px; background: #fff; color: #222; border-radius: 8px 8px 0 0; padding-left: 11px; }
.current span { width: 136px; margin: 0 9px 0 8px; }
.plus { width: 23px; height: 23px; border: 0; border-radius: 50%; background: #d7d2dc; padding: 0; margin-left: 17px; display: flex; align-items: center; justify-content: center; }
.winbtns { margin-left: auto; display: flex; gap: 24px; padding-right: 14px; }
.winbtns path { fill: none; stroke: #fff; }

.address { height: 42px; display: flex; align-items: center; justify-content: space-between; background: #fff; color: #111; }
.addr-left { flex: 1; display: flex; align-items: center; padding-left: 14px; }
.addr-left .bare { margin-right: 24px; }
.addr-left .bare path, .addr-left .bare circle { fill: none; stroke: #111; stroke-width: 1.300; }
.addr-left .bare + .lock { margin-left: -6px; }
.lock { width: 24px; height: 24px; border-radius: 6px; background: #ececec; display: flex; align-items: center; justify-content: center; }
.url { height: 24px; line-height: 24px; padding: 0 8px; margin-left: 2px; border-radius: 6px; background: #ececec; color: #777; font-size: 15px; }
.doc-title { font-size: 15px; }
.addr-right { flex: 1; display: flex; align-items: center; justify-content: flex-end; padding-right: 15px; margin-left: 14px; }
.gray path { fill: none; stroke: #999; }
.reviews { display: flex; align-items: center; gap: 3px; font-size: 12px; margin: 0 23px 0 20px; padding-bottom: 1px; border-bottom: 2px solid #7dc795; border-image: linear-gradient(90deg, #7dc795 93%, #ee6a5f 93%) 1; white-space: nowrap; }
.addr-right i { width: 1px; height: 16px; background: #ccc; margin: 0 20px 0 18px; }
.addr-right > svg:nth-of-type(n+4) { margin-left: 24px; }
.addr-right > svg:last-child { margin-left: 18px; }

.bookmarks { height: 22px; display: grid; grid-template-columns: 87px 79px 73px 134px 109px 62px 95px 137px 130px 140px 140px 84px 81px 139px 140px 115px 31px 40px 1fr; padding: 0 0 2px 15px; align-items: center; background: #fff; color: #222; font-size: 12px; line-height: 20px; }
.bookmarks a { display: flex; align-items: center; gap: 4px; white-space: nowrap; min-width: 0; padding-right: 12px; }
.bookmarks a span { overflow: hidden; }
.more { font-size: 16px; justify-content: flex-start; line-height: 16px; }
.bookmarks .other { gap: 8px; justify-content: flex-start; padding-left: 3px; }

.appbar { background: #44865f; color: #fff; }
.brandrow { display: flex; height: 28px; align-items: center; position: relative; padding: 0 11px; }
.brand { display: flex; align-items: center; gap: 3px; font-size: 13px; font-weight: 500; width: 134px; }
.quick { display: flex; gap: 20px; }
.quick path { fill: none; stroke: #e8f1eb; }
.quick .dim path { fill: #86b398; stroke: none; }
.fname { position: absolute; left: 50%; transform: translateX(-50%); font-size: 12px; }
.user { margin-left: auto; font-family: Roboto, sans-serif; font-weight: 700; }
.menurow { display: flex; height: 28px; align-items: stretch; font-size: 12px; }
.mtab { border: 0; background: none; padding: 0 12px; }
.mtab.on { background: #f1f1f1; color: #444; }
.share { align-self: flex-start; margin-top: -2px; height: 26px; width: 155px; border: 0; border-radius: 4px; background: linear-gradient(#ffd96b, #ffe38c); color: #111; font-size: 13px; white-space: nowrap; display: flex; align-items: center; gap: 5px; justify-content: center; padding: 0; }
.burger { margin: 0 13px 0 73px; }

.toolbar { display: flex; height: 66px; padding-top: 10px; background: #f1f1f1; font-size: 12px; }
.group { border-left: 1px solid #cbcbcb; padding-left: 10px; height: 46px; display: flex; flex-direction: column; gap: 6px; }
.g1 { width: 40px; border: 0; }
.g2 { width: 239px; }
.g3 { width: 156px; }
.g4 { width: 52px; }
.g5 { width: 72px; }
.g6 { width: 134px; }
.g7 { width: 52px; }
.g8 { width: 83px; }
.trow { display: flex; gap: 6px; height: 20px; align-items: flex-start; }
.tight { gap: 2px; }
.g5 .trow { gap: 12px; }
.g6 .trow { gap: 0 }
.g6 .ib:first-child, .g6 .ib:nth-child(3) { margin-right: 11px; }
.g8 .trow { gap: 0; }
.ib { width: 20px; height: 20px; padding: 0; border: 0; background: none; display: flex; align-items: center; }
.ib svg { width: 20px; height: 20px; fill: none; stroke: #333; }
.ib.on { background: #7d858c; }
.ib.on svg { stroke: #fff; }
.ib.on :deep(.f) { fill: #fff; }
.ib.dd { width: 31px; }
svg :deep(.f) { fill: currentColor; }
.ib .chev, .chev { width: 7px; height: 5px; margin-left: 2px; fill: none; stroke: #444; }
.glyph { justify-content: center; font-size: 15px; }
.combo { position: relative; display: flex; align-items: center; height: 22px; border: 1px solid #cbcbcb; border-radius: 2px; background: #fff; padding: 0; }
.combo select { appearance: none; -webkit-appearance: none; border: 0; background: none; width: 100%; height: 20px; padding: 0 4px; }
.combo .chev { position: absolute; right: 4px; }
.font { width: 127px; }
.size { width: 45px; }
.fmt { width: 113px; }
.gallery { flex: 1; min-width: 0; margin-right: 6px; height: 46px; display: flex; background: #fff; border: 1px solid #cbcbcb; border-radius: 2px; }
.style { flex: 1 1 0; min-width: 0; border: 0; border-right: 1px solid #cbcbcb; background: #fff; padding: 2px; text-align: left; font-family: Lato, "Open Sans", sans-serif; font-size: 13px; }
.style span { display: block; height: 40px; line-height: 38px; padding-left: 4px; overflow: hidden; white-space: nowrap; }
.normal { outline: 2px solid #868686; outline-offset: -2px; color: #000; font-size: 12px; }
.neutral span { background: #ffeb9c; color: #9c6500; }
.bad span { background: #ffc7ce; color: #9c0006; }
.good span { background: #c6efce; color: #006100; }
.entry span { background: #ffcc99; color: #3f3f76; border: 1px solid #7f7f7f; }
.output span { background: #f2f2f2; color: #3f3f3f; border: 1px solid #3f3f3f; font-weight: 700; }
.calc span { background: #f2f2f2; color: #fa7d00; border: 1px solid #7f7f7f; font-weight: 700; }
.control span { background: #a5a5a5; color: #fff; border: 2px solid #3f3f3f; font-weight: 700; line-height: 36px; padding-left: 2px; }
.remark span { color: #7f7f7f; font-style: italic; }
.expand { width: 29px; border: 0; border-left: 1px solid #cbcbcb; margin-left: 2px; background: #fff; padding: 0; display: flex; align-items: center; justify-content: center; }

.work { display: flex; border-top: 1px solid #cbcbcb; background: #f1f1f1; }
.leftbar { width: 40px; border-right: 1px solid #cbcbcb; padding-top: 20px; display: flex; flex-direction: column; align-items: center; gap: 18px; }
.leftbar svg, .rightbar svg { fill: none; stroke: #444; }
.sheet { flex: 1; min-width: 0; display: flex; flex-direction: column; }
.formula { display: flex; align-items: center; height: 20px; background: #fff; border-bottom: 1px solid #cbcbcb; }
.namebox { display: flex; align-items: center; width: 100px; height: 19px; border-right: 1px solid #cbcbcb; }
.namebox input { width: 85px; border: 0; padding: 0 4px; height: 19px; background: none; }
.fx { width: 21px; height: 19px; border: 0; border-right: 1px solid #cbcbcb; background: none; padding: 0; font-family: "Liberation Serif", serif; font-size: 15px; line-height: 16px; }
.expr { flex: 1; min-width: 0; border: 0; height: 19px; padding: 0; }
.formula > .chev { margin-right: 5px; }
.gridarea { display: flex; margin-top: 4px; border-top: 1px solid #cbcbcb; }
.gridcol { flex: 1; min-width: 0; overflow: hidden; background: #fff; }
table { table-layout: fixed; width: 1637px; border-collapse: separate; border-spacing: 0; }
.c0 { width: 26px; }
.cB { width: 100px; }
.cC { width: 90px; }
.cD { width: 225px; }
.cE { width: 102px; }
.cF { width: 84px; }
th { font: 12px/16px Lato, "Open Sans", sans-serif; color: #444; background: #e1e1e1; border-right: 1px solid #cbcbcb; border-bottom: 1px solid #cbcbcb; padding: 0; text-align: center; }
thead th { height: 18px; }
th.sel { background: #c1c1c1; border-color: #929292; }
.corner { border-color: #6f7d45; }
.corner svg { margin-left: 12px; }
tbody th, td { height: 21px; }
tbody th { padding-top: 2px; }
td { padding: 2px 4px 0 2px; font-size: 13px; line-height: 17px; color: #777; white-space: nowrap; }
.band td:not(:last-child) { background: #e1f5fe; }
.d0 { padding-left: 3px; border-left: 2px solid #fff; position: relative; }
.d1 { text-align: center; padding-right: 0; }
.d3, .d4 { text-align: right; }
.frame { position: absolute; inset: -2px -1px -2px -1px; border: 2px solid #44865f; }
.frame::after { content: ""; position: absolute; right: -3px; bottom: -3px; width: 5px; height: 5px; background: #44865f; border: solid #fff; border-width: 1px 0 0 1px; box-sizing: content-box; }
.pick { position: absolute; left: 98px; top: 3px; width: 16px; height: 16px; border: 1px solid #bbb; background: #fff; padding: 0; display: flex; align-items: center; justify-content: center; }
.hint { position: absolute; left: -2px; bottom: 28px; width: 300px; height: 43px; padding: 5px 12px; background: #fff; border: 1px solid #cbcbcb; border-radius: 3px; box-shadow: 0 4px 14px rgba(0, 0, 0, .25); font-size: 11px; line-height: 15px; color: #444; white-space: normal; }
.hscroll { display: flex; height: 14px; background: #e1e1e1; padding: 0 1px; justify-content: space-between; }
.arr { width: 13px; height: 13px; border: 1px solid #cbcbcb; background: #f1f1f1; display: flex; align-items: center; justify-content: center; flex: none; }
.thumb { background: #f1f1f1; border: 1px solid #cbcbcb; display: flex; align-items: center; justify-content: center; }
.thumb::after { content: ""; }
.hscroll .thumb { flex: 1; height: 13px; margin: 0 10px 0 1px; }
.hscroll .thumb::after { width: 13px; height: 6px; background: repeating-linear-gradient(90deg, #cbcbcb 0 1px, transparent 1px 2px); }
.vscroll { width: 14px; background: #e1e1e1; display: flex; flex-direction: column; padding: 1px 0 14px; }
.before { flex: 207; }
.after { flex: 468; }
.vscroll .thumb { width: 13px; height: 49px; }
.vscroll .thumb::after { width: 5px; height: 13px; background: repeating-linear-gradient(#cbcbcb 0 1px, transparent 1px 2px); }

.panel { width: 221px; border-left: 1px solid #cbcbcb; border-right: 1px solid #cbcbcb; padding: 7px 10px 0 15px; line-height: 15px; }
.h { display: block; font-weight: 700; }
hr { border: 0; border-top: 1px solid #cbcbcb; margin: 8px 0; }
.line-row { display: flex; align-items: center; margin-top: 8px; justify-content: space-between; }
.linesel { width: 93px; }
.linesel i { width: 60px; height: 1px; background: #000; margin-left: 10px; }
.line-row span { margin-left: 15px; }
.color { width: 45px; }
.color i { width: 31px; height: 18px; margin-left: 1px; background: #000; }
p { margin: 0; }
.panel p { margin: 8px 0; }
.borders { display: grid; grid-template-columns: repeat(6, 21px); gap: 8px 3px; }
.borders button { height: 21px; padding: 0; border: 1px solid #cbcbcb; border-radius: 2px; background: #fff; overflow: hidden; }
.borders svg { margin: -1px; fill: none; stroke: #222; }
.full { width: 100%; }
.spin { display: flex; align-items: center; width: 60px; height: 22px; border: 1px solid #cbcbcb; border-radius: 2px; background: #fff; }
.spin input { width: 43px; border: 0; background: none; text-align: right; padding: 0 3px; margin-right: 4px; }
.spin svg { fill: none; stroke: #444; }
.orient { margin: 16px 0 8px; }
.angle { display: flex; align-items: center; gap: 9px; }
.view { margin: 16px 0 8px; }
.tick { display: flex; align-items: center; gap: 8px; height: 15px; margin-bottom: 8px; }
.tick input { appearance: none; -webkit-appearance: none; width: 14px; height: 14px; border: 1px solid #cbcbcb; border-radius: 2px; background: #fff; }
.condfmt { gap: 5px; line-height: 20px; }
.condfmt svg:first-child { fill: none; stroke: #333; }
.rightbar { width: 39px; padding-top: 15px; display: flex; flex-direction: column; gap: 8px; }
.rightbar button { height: 30px; color: #a0a0a0; }
.rightbar svg { stroke: #a0a0a0; }
.rightbar .on { background: #7d858c; }
.rightbar .on svg { stroke: #fff; }

.status { display: flex; height: 25px; background: #f1f1f1; border-top: 1px solid #cbcbcb; }
.navs { width: 115px; border-right: 1px solid #cbcbcb; display: flex; align-items: center; padding-left: 17px; gap: 12px; }
.adds { width: 60px; border-right: 1px solid #cbcbcb; display: flex; align-items: center; padding-left: 13px; gap: 12px; }
.stab { border: 0; border-right: 1px solid #cbcbcb; border-top: 3px solid #fff; background: #f1f1f1; color: #a0a0a0; padding: 0 12px 2px; }
.stab.on { background: #fff; color: #222; font-weight: 700; padding: 0 10px 2px; }
.stab:nth-last-of-type(1) { border-top-color: #f1f1f1; }
.zoomer { display: flex; align-items: center; gap: 8px; padding-right: 28px; }

.taskbar { display: flex; height: 40px; background: #1d1d1d; }
.task { width: 48px; border: 0; border-bottom: 2px solid transparent; background: none; padding: 2px 0 0; display: flex; align-items: center; justify-content: center; }
.alice { width: 64px; }
.app { width: 49px; }
.app.open { border-image: linear-gradient(90deg, transparent 4px, #76b9ed 4px 35px, #4f7da3 35px 44px, transparent 44px) 2; }
.app.active { background: #4b4b4b; border-bottom-color: #76b9ed; }
.tray { display: flex; align-items: center; color: #eee; font-size: 12px; padding-right: 16px; }
.tray svg { fill: none; stroke: #eee; margin-right: 8px; }
.tray time { font-size: 11px; line-height: 18px; text-align: center; width: 56px; margin: 0 16px 0 12px; }
.tray .note { margin: 0; }

.marker { position: absolute; left: 0; top: 223px; }
.arrow { position: absolute; left: 504px; top: 557px; }
.callout { position: absolute; left: 527px; top: 663px; width: 559px; height: 191px; border: 5px solid #e53d30; border-radius: 8px; }
.callout p { margin: 48px 0 0 110px; width: 375px; padding: 7px 15px 11px; background: rgba(255, 255, 255, .8); border-radius: 4px; font-size: 32px; line-height: 36px; color: #e53d30; white-space: nowrap; }
</style>
